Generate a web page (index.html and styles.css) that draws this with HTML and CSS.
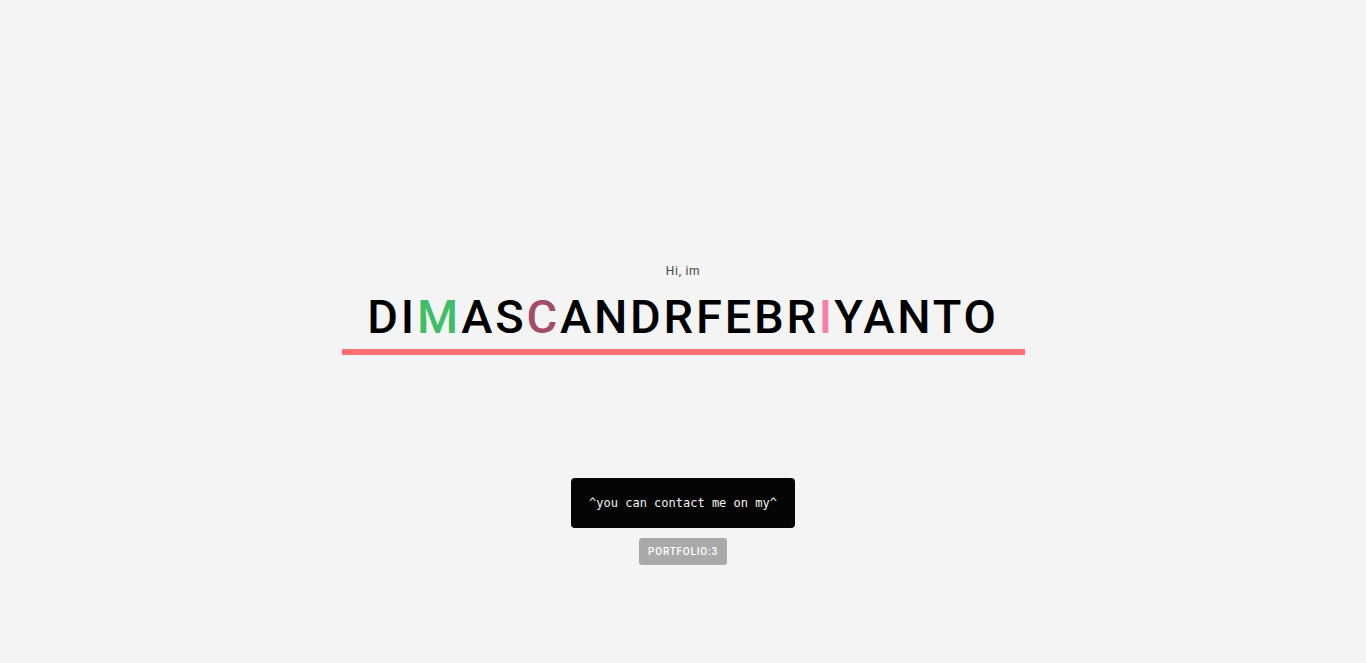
FILE: index.html
```html
<!DOCTYPE html>
<html>
<head>
<meta charset="utf-8">
<link rel="stylesheet" href="styles.css">
</head>
<body>
<main class="page">
  <section class="hero">
    <p class="greet">Hi, im</p>
    <h1 class="name">DI<span class="m">M</span>AS<span class="c">C</span>ANDRFEBR<span class="i">I</span>YANTO</h1>
    <div class="bar"></div>
  </section>
  <section class="contact">
    <div class="box">^you can contact me on my^</div>
    <a class="btn">PORTFOLIO:3</a>
  </section>
</main>
</body>
</html>
```

FILE: styles.css
```css
html, body {
  margin: 0;
  padding: 0;
  background: #f4f4f4;
}
.page {
  display: flex;
  flex-direction: column;
  align-items: center;
  height: 663px;
}
.hero {
  display: flex;
  flex-direction: column;
  align-items: center;
  padding-top: 264px;
}
.greet {
  margin: 0;
  font-family: "Roboto", sans-serif;
  font-size: 12px;
  letter-spacing: 0.7px;
  color: #444;
  line-height: 14px;
}
.name {
  margin: 14px 0 0 0;
  font-family: "Roboto", sans-serif;
  font-weight: 500;
  font-size: 47px;
  letter-spacing: 2.8px;
  line-height: 50px;
  color: #000;
  height: 50px;
}
.m { color: #3fbd68; }
.c { color: #a24c67; }
.i { color: #f67ea8; }
.bar {
  width: 683px;
  height: 6px;
  background: #ff7171;
  margin-top: 7px;
}
.contact {
  display: flex;
  flex-direction: column;
  align-items: center;
  margin-top: 123px;
  gap: 10px;
}
.box {
  width: 224px;
  height: 50px;
  box-sizing: border-box;
  background: #050505;
  border-radius: 4px;
  color: #f2f2f2;
  font-family: "DejaVu Sans Mono", monospace;
  font-size: 12px;
  display: flex;
  align-items: center;
  justify-content: center;
}
.btn {
  width: 88px;
  height: 27px;
  background: #a9a9a9;
  border-radius: 3px;
  color: #fff;
  font-family: "Roboto", sans-serif;
  font-weight: 500;
  font-size: 10px;
  letter-spacing: 0.8px;
  display: flex;
  align-items: center;
  justify-content: center;
}
```
